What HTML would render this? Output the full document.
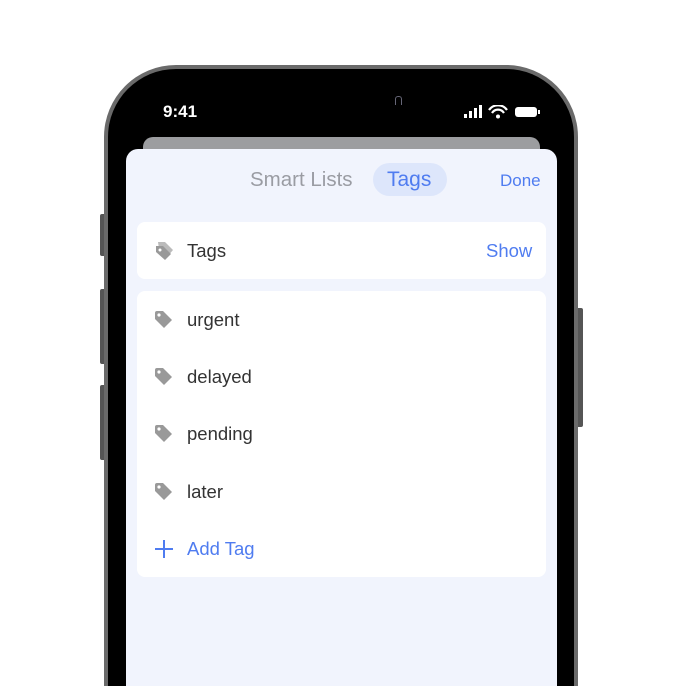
<!DOCTYPE html>
<html style="width:686px;height:686px;overflow:hidden"><head><style>
body{margin:0;width:686px;height:686px;background:#fff;position:relative;overflow:hidden;font-family:"Liberation Sans",sans-serif}
.a{position:absolute}
.txt{font-size:18.5px;color:#333}
.blue{color:#4f7cf0}
</style></head><body>
<div class="a" style="left:100px;top:214px;width:6px;height:42px;background:#555;border-radius:2px"></div>
<div class="a" style="left:100px;top:289px;width:6px;height:75px;background:#555;border-radius:2px"></div>
<div class="a" style="left:100px;top:385px;width:6px;height:75px;background:#555;border-radius:2px"></div>
<div class="a" style="left:576px;top:308px;width:7px;height:119px;background:#555;border-radius:2px"></div>
<div class="a" style="left:104px;top:65px;width:474px;height:621px;background:#6a6a6a;border-radius:72px 72px 0 0"></div>
<div class="a" style="left:108px;top:69px;width:466px;height:617px;background:#000;border-radius:68px 68px 0 0"></div>
<div class="a" style="left:163px;top:102px;color:#fff;font-size:17px;font-weight:bold">9:41</div>
<div class="a" style="left:395px;top:96px;width:5px;height:8px;border:1px solid #667;border-radius:3px 3px 0 0;border-bottom:none"></div>
<svg class="a" style="left:463px;top:105px" width="78" height="15">
<rect x="1" y="9" width="3" height="4" fill="#fff"/><rect x="6" y="6" width="3" height="7" fill="#fff"/><rect x="11" y="3" width="3" height="10" fill="#fff"/><rect x="16" y="0" width="3" height="13" fill="#fff"/>
<path d="M26 5 A11 11 0 0 1 44 5" stroke="#fff" stroke-width="2.2" fill="none"/><path d="M29 8 A7 7 0 0 1 41 8" stroke="#fff" stroke-width="2.2" fill="none"/><circle cx="35" cy="11.5" r="2" fill="#fff"/>
<rect x="52" y="2" width="22" height="10" rx="3" fill="#fff"/><rect x="75" y="5" width="2" height="4" fill="#fff"/>
</svg>
<div class="a" style="left:143px;top:137px;width:397px;height:40px;background:#9c9da0;border-radius:10px"></div>
<div class="a" style="left:126px;top:149px;width:431px;height:537px;background:#f1f4fd;border-radius:12px 12px 0 0"></div>
<div class="a" style="left:250px;top:168px;font-size:20.5px;color:#9a9ca3">Smart Lists</div>
<div class="a" style="left:373px;top:163px;width:74px;height:33px;background:#dde6fb;border-radius:17px"></div>
<div class="a blue" style="left:387px;top:168px;font-size:21px">Tags</div>
<div class="a blue" style="left:500px;top:171px;font-size:17px">Done</div>
<div class="a" style="left:137px;top:222px;width:409px;height:57px;background:#fff;border-radius:8px"></div>
<svg class="a" style="left:154px;top:241px" width="22" height="22"><path d="M4 2h7l8 8-6 7-8-8z" fill="#bbb" transform="translate(0,-1)"/><path d="M2 5h7l8 8-6 6-9-8z" fill="#999"/><circle cx="6" cy="9" r="1.5" fill="#fff"/></svg>
<div class="a txt" style="left:187px;top:240px">Tags</div>
<div class="a blue" style="left:486px;top:240px;font-size:18.5px">Show</div>
<div class="a" style="left:137px;top:291px;width:409px;height:286px;background:#fff;border-radius:8px"></div>
<svg width="0" height="0" style="position:absolute"><defs><symbol id="t" viewBox="0 0 20 20"><path d="M1 3a2 2 0 0 1 2-2h6l9 9-8 8-9-9z" fill="#999"/><circle cx="5" cy="5" r="1.6" fill="#fff"/></symbol></defs></svg>
<svg class="a" style="left:154px;top:310px" width="20" height="20"><use href="#t"/></svg>
<div class="a txt" style="left:187px;top:309px">urgent</div>
<svg class="a" style="left:154px;top:367px" width="20" height="20"><use href="#t"/></svg>
<div class="a txt" style="left:187px;top:366px">delayed</div>
<svg class="a" style="left:154px;top:424px" width="20" height="20"><use href="#t"/></svg>
<div class="a txt" style="left:187px;top:423px">pending</div>
<svg class="a" style="left:154px;top:482px" width="20" height="20"><use href="#t"/></svg>
<div class="a txt" style="left:187px;top:481px">later</div>
<svg class="a" style="left:154px;top:539px" width="20" height="20"><path d="M10 1v18M1 10h18" stroke="#4f7cf0" stroke-width="2"/></svg>
<div class="a blue" style="left:187px;top:538px;font-size:18.5px">Add Tag</div>
</body></html>
